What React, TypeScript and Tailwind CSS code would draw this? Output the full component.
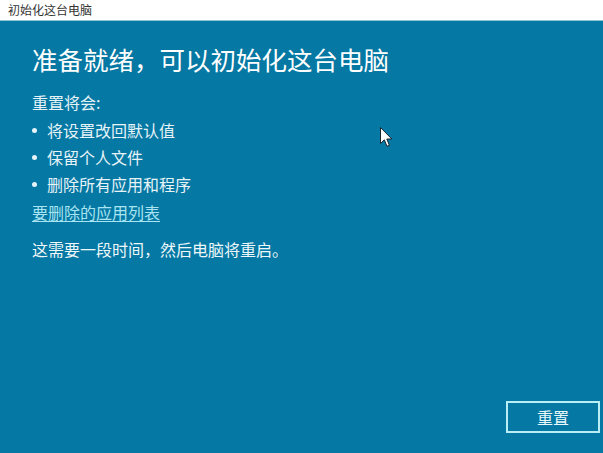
const font = { fontFamily: '"Microsoft YaHei", "Noto Sans CJK SC", sans-serif' }

function Cursor() {
  return (
    <svg className="absolute left-[380px] top-[106px]" width="13" height="21" viewBox="0 0 13 21">
      <path
        d="M0.5 0.5 L0.5 16.5 L4.3 12.8 L7 19.3 L9.4 18.3 L6.8 12 L11.8 12 Z"
        fill="white"
        stroke="#1b2430"
        strokeWidth="1"
        strokeLinejoin="round"
      />
    </svg>
  )
}

export default function App() {
  const items = ['将设置改回默认值', '保留个人文件', '删除所有应用和程序']
  return (
    <div className="flex h-[453px] w-[603px] flex-col overflow-hidden bg-[#0578a3] text-white" style={font}>
      {/* 标题栏 */}
      <div className="flex h-[21px] items-center border-b border-[#8fc6d6] bg-white pl-[8px] text-[12px] text-[#333]">
        初始化这台电脑
      </div>

      <div className="relative flex flex-1 flex-col pl-[32px]">
        <h1 className="mt-[21px] text-[25.5px] leading-[34px] text-white">准备就绪，可以初始化这台电脑</h1>

        <div className="mt-[15px] text-[16px] leading-[22px] text-[#e6f3f8]">重置将会:</div>
        <ul className="mt-[6px] flex flex-col gap-[5px] text-[16px] leading-[22px] text-[#e6f3f8]">
          {items.map((t) => (
            <li key={t} className="flex items-center">
              <span className="mr-[10px] h-[5px] w-[5px] rounded-full bg-[#e6f3f8]" />
              {t}
            </li>
          ))}
        </ul>
        <a className="mt-[6px] w-fit text-[16px] leading-[22px] text-[#a8e4f2] underline underline-offset-2">
          要删除的应用列表
        </a>

        <p className="mt-[15px] text-[16px] leading-[22px] text-[#eef7fa]">这需要一段时间，然后电脑将重启。</p>

        <div className="mt-auto mb-[20px] flex justify-end pr-[3px]">
          <button className="flex h-[32px] w-[94px] items-center justify-center border-2 border-[#b8eef5] text-[16px] text-[#e8f8fb]">
            重置
          </button>
        </div>

        <Cursor />
      </div>
    </div>
  )
}
